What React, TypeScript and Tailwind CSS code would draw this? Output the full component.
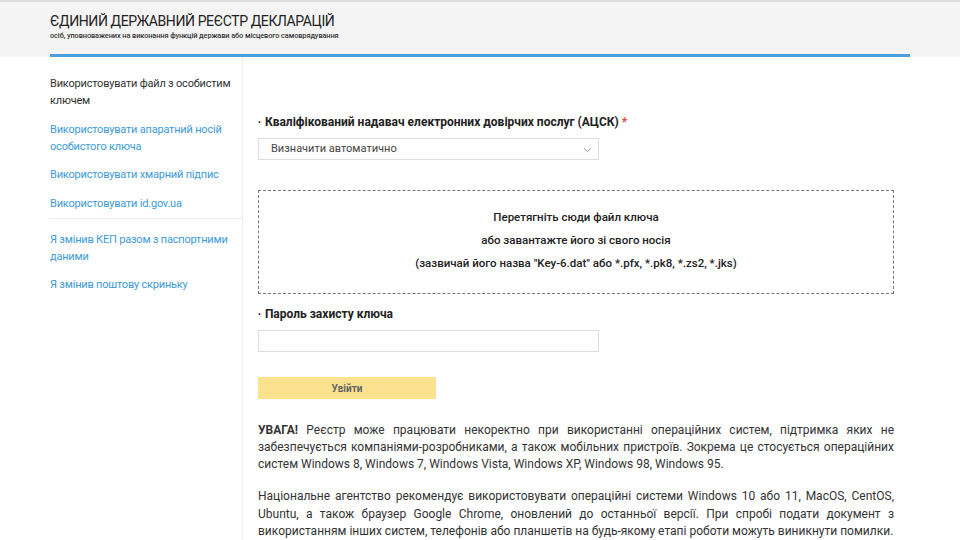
const sideLinks = [
  { text: "Використовувати апаратний носій особистого ключа" },
  { text: "Використовувати хмарний підпис" },
  { text: "Використовувати id.gov.ua" },
];

const extraLinks = [
  { text: "Я змінив КЕП разом з паспортними даними" },
  { text: "Я змінив поштову скриньку" },
];

export default function App() {
  return (
    <div className="min-h-[540px] bg-white text-[#333] font-['Roboto',sans-serif]">
      {/* HEADER */}
      <header className="bg-[#f4f4f4] border-t-2 border-[#dcdcdc]">
        <div className="w-[860px] mx-auto pt-[9px] border-b-[3px] border-[#4a9fdc]">
          <h1 className="text-[14px] leading-[20px] tracking-[-0.4px] uppercase text-[#222]">
            Єдиний державний реєстр декларацій
          </h1>
          <p className="text-[7.4px] leading-[10px] font-medium tracking-[-0.1px] pb-[13px] text-[#333]">
            осіб, уповноважених на виконання функцій держави або місцевого самоврядування
          </p>
        </div>
      </header>

      {/* BODY */}
      <div className="w-[860px] mx-auto flex">
        {/* SIDEBAR */}
        <aside className="w-[193px] shrink-0 border-r border-[#f0f0f0] min-h-[483px] pt-[18px] text-[11px] leading-[17px] tracking-[-0.2px]">
          <div className="pr-2 text-[#333]">
            Використовувати файл з особистим ключем
          </div>
          {sideLinks.map((l) => (
            <a key={l.text} className="block pr-2 mt-[11.5px] text-[#3d9ad8]">
              {l.text}
            </a>
          ))}
          <div className="border-t border-[#ececec] mt-[6px] mb-[12px]" />
          {extraLinks.map((l, i) => (
            <a
              key={l.text}
              className={`block pr-2 text-[#3d9ad8] ${i > 0 ? "mt-[11.5px]" : ""}`}
            >
              {l.text}
            </a>
          ))}
        </aside>

        {/* MAIN */}
        <main className="flex-1 pl-[15px] pr-[16px] pt-[57px]">
          <label className="flex items-center text-[12px] leading-[17px] font-bold text-[#222]">
            <span className="text-[8px] mr-[4px]">•</span>
            Кваліфікований надавач електронних довірчих послуг (АЦСК)
            <span className="text-[#e0453a] ml-[3px]">*</span>
          </label>
          <div className="mt-[7px] w-[341px] h-[22px] border border-[#dedede] flex items-center justify-between pl-[12px] pr-[6px] pt-[1px] text-[11px] text-[#444]">
            <span>Визначити автоматично</span>
            <svg width="9" height="6" viewBox="0 0 9 6" fill="none">
              <path d="M1 1.2 4.5 4.6 8 1.2" stroke="#999" strokeWidth="1" />
            </svg>
          </div>

          <div className="mt-[30px] h-[104px] border border-dashed border-[#777] flex flex-col items-center justify-center gap-[6px] pb-[3px] text-[11.5px] leading-[17px] font-medium text-[#222]">
            <div>Перетягніть сюди файл ключа</div>
            <div>або завантажте його зі свого носія</div>
            <div>(зазвичай його назва "Key-6.dat" або *.pfx, *.pk8, *.zs2, *.jks)</div>
          </div>

          <label className="mt-[12px] flex items-center text-[12px] leading-[17px] font-bold text-[#222]">
            <span className="text-[8px] mr-[4px]">•</span>
            Пароль захисту ключа
          </label>
          <input
            type="password"
            className="mt-[7px] block w-[341px] h-[22px] border border-[#dedede] outline-none"
          />

          <button className="mt-[25px] w-[178px] h-[22px] bg-[#fbe28f] text-[10px] font-bold text-[#666]">
            Увійти
          </button>

          <p className="mt-[23px] text-[12px] leading-[17px] text-justify text-[#333]">
            <b>УВАГА!</b>{" "}Реєстр може працювати некоректно при використанні
            операційних систем, підтримка яких не забезпечується
            компаніями-розробниками, а також мобільних пристроїв. Зокрема це
            стосується операційних систем Windows 8, Windows 7, Windows Vista,
            Windows XP, Windows 98, Windows 95.
          </p>
          <p className="mt-[15px] text-[12px] leading-[17.5px] text-justify text-[#333]">
            Національне агентство рекомендує використовувати операційні системи
            Windows 10 або 11, MacOS, CentOS, Ubuntu, а також браузер Google
            Chrome, оновлений до останньої версії. При спробі подати документ з
            використанням інших систем, телефонів або планшетів на будь-якому
            етапі роботи можуть виникнути помилки.
          </p>
        </main>
      </div>
    </div>
  );
}
